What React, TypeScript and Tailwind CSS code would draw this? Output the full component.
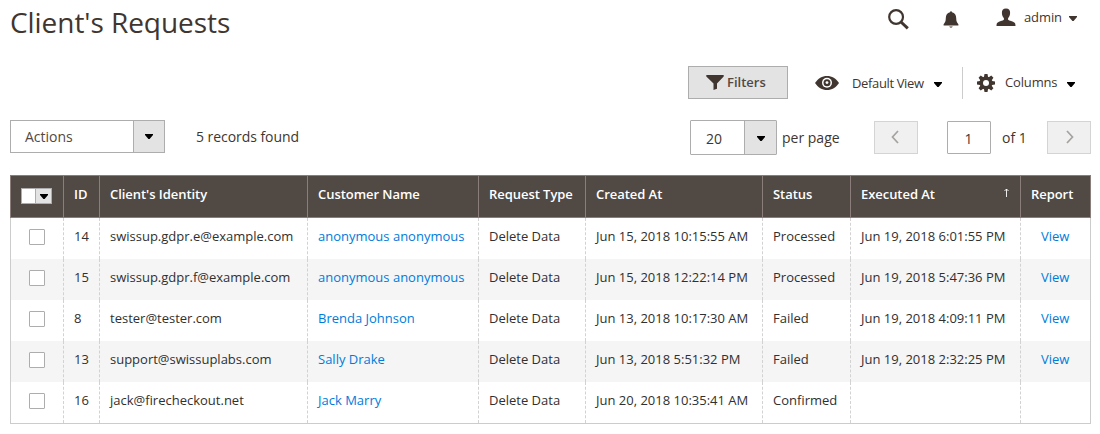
import React from "react";

type Request = {
  id: number;
  identity: string;
  customer: string;
  created: string;
  status: string;
  executed?: string;
};

const requests: Request[] = [
  { id: 14, identity: "swissup.gdpr.e@example.com", customer: "anonymous anonymous", created: "Jun 15, 2018 10:15:55 AM", status: "Processed", executed: "Jun 19, 2018 6:01:55 PM" },
  { id: 15, identity: "swissup.gdpr.f@example.com", customer: "anonymous anonymous", created: "Jun 15, 2018 12:22:14 PM", status: "Processed", executed: "Jun 19, 2018 5:47:36 PM" },
  { id: 8, identity: "tester@tester.com", customer: "Brenda Johnson", created: "Jun 13, 2018 10:17:30 AM", status: "Failed", executed: "Jun 19, 2018 4:09:11 PM" },
  { id: 13, identity: "support@swissuplabs.com", customer: "Sally Drake", created: "Jun 13, 2018 5:51:32 PM", status: "Failed", executed: "Jun 19, 2018 2:32:25 PM" },
  { id: 16, identity: "jack@firecheckout.net", customer: "Jack Marry", created: "Jun 20, 2018 10:35:41 AM", status: "Confirmed" },
];

const columns = "grid grid-cols-[53px_36px_208px_171px_107px_177px_88px_170px_71px]";

function Caret({ className = "" }: { className?: string }) {
  return (
    <svg viewBox="0 0 8 5" className={`h-[5px] w-2 shrink-0 fill-current ${className}`}>
      <path d="M0 0h8v1L4.6 5H3.4L0 1z" />
    </svg>
  );
}

function HeadCell({ children, className = "" }: { children?: React.ReactNode; className?: string }) {
  return <div className={`border-l border-[#8a7d7a] pt-[9px] pl-[10px] leading-[18px] ${className}`}>{children}</div>;
}

function Cell({ children, className = "" }: { children?: React.ReactNode; className?: string }) {
  return <div className={`border-l border-dashed border-[#d2d2d2] pt-[9px] pl-[10px] leading-[18px] ${className}`}>{children}</div>;
}

function TopBar() {
  return (
    <header className="flex h-[66px] items-start pl-[10px]">
      <h1 className="w-[877px] pt-[3px] text-[28px] leading-[38px] tracking-[-0.05px] text-[#41362f]">Client's Requests</h1>
      <svg viewBox="0 0 22 22" className="mt-[8px] h-[22px] w-[22px]" fill="none" stroke="#41362f">
        <circle cx="9.1" cy="9" r="6.9" strokeWidth="2.2" />
        <path d="M14 14l6.8 6.3" strokeWidth="3" />
      </svg>
      <svg viewBox="0 0 16 18" className="mt-[11px] ml-[34px] h-[18px] w-4" fill="#41362f">
        <path d="M7 1.2a1 1 0 0 1 2 0c2.8.5 4.2 2.7 4.2 5.8 0 3.4.8 4.7 2.2 6.2v1.3H.6v-1.3C2 11.700 2.800 10.400 2.800 7c0-3.100 1.400-5.300 4.200-5.800zM6.300 15.600h3.400c-.4 1.500-3 1.500-3.400 0z" />
      </svg>
      <svg viewBox="0 0 20 18" className="mt-[8px] ml-[37px] h-[18px] w-5" fill="#41362f">
        <path d="M10 .5c3 0 4.300 1.800 4.100 4.500-.1 2.400-.9 4-2 5.100v1.700c1 1 4.900 1.500 6.500 3 .7.700.9 1.600.9 3.200H.5c0-1.600.2-2.500.9-3.200 1.600-1.500 5.500-2 6.500-3v-1.700c-1.100-1.100-1.900-2.700-2-5.100C5.700 2.300 7 .5 10 .5z" />
      </svg>
      <span className="mt-[8px] ml-[8px] w-[45px] text-[13px] leading-[18px] tracking-[-0.1px] text-[#41362f]">admin</span>
      <Caret className="mt-[16px] text-[#41362f]" />
    </header>
  );
}

function ViewControls() {
  return (
    <div className="flex h-[33px] items-center pl-[688px] text-[13px] leading-[18px] text-[#41362f]">
      <button className="flex h-[33px] w-[100px] shrink-0 items-center border border-[#adadad] bg-[#e3e3e3] pl-[17px] font-semibold text-[#514943]">
        <svg viewBox="0 0 18 15" className="mr-[3px] h-[15px] w-[18px] fill-[#41362f]">
          <path d="M.3 0h17.400v1.500L11 8.500v5.200L7.500 15V8.500L.3 1.500z" />
        </svg>
        <span className="pb-[2px]">Filters</span>
      </button>
      <svg viewBox="0 0 24 14" className="ml-[27px] h-[14px] w-6 shrink-0">
        <path fill="#41362f" d="M0 7C3 2.500 7 0 12 0s9 2.500 12 7c-3 4.500-7 7-12 7S3 11.500 0 7z" />
        <circle cx="12" cy="6.800" r="5" fill="#fff" />
        <circle cx="12" cy="6.800" r="3.500" fill="#41362f" />
        <circle cx="12" cy="6.600" r="1.400" fill="#fff" />
      </svg>
      <span className="ml-[13px] w-[82px] shrink-0 tracking-[-0.36px]">Default View</span>
      <Caret className="mt-[3px] text-black" />
      <div className="ml-[20px] flex h-8 shrink-0 items-center border-l border-[#cccccc] pl-[14px]">
        <svg viewBox="-9 -9 18 18" className="h-[18px] w-[18px] shrink-0">
          <g fill="#41362f">
            <circle r="6.500" />
            {[0, 45, 90, 135].map((angle) => (
              <path key={angle} d="M-2.100-6L-1.500-9h3l.6 3v12l-.6 3h-3l-.6-3z" transform={`rotate(${angle})`} />
            ))}
          </g>
          <circle r="3" fill="#fff" />
        </svg>
        <span className="ml-[10px] w-[62px] pb-[2px] tracking-[-0.15px]">Columns</span>
        <Caret className="mt-[3px] text-black" />
      </div>
    </div>
  );
}

function Pager() {
  return (
    <div className="mt-[21px] flex h-[35px] items-start pl-[10px] text-[14px] leading-[19px] text-[#41362f]">
      <div className="flex h-[33px] w-[155px] shrink-0 border border-[#adadad] text-[#514943]">
        <span className="flex-1 pt-[6px] pl-[14px]">Actions</span>
        <span className="flex w-[31px] items-center justify-center border-l border-[#adadad] bg-[#e3e3e3] text-black"><Caret /></span>
      </div>
      <span className="ml-[31px] w-[494px] shrink-0 pt-[7px] tracking-[-0.05px]">5 records found</span>
      <div className="flex h-[35px] w-[87px] shrink-0 rounded-[1px] border border-[#adadad]">
        <span className="flex-1 pt-[8px] pl-[15px]">20</span>
        <span className="flex w-8 items-center justify-center border-l border-[#adadad] bg-[#e3e3e3] pt-[2px] text-black"><Caret /></span>
      </div>
      <span className="ml-[5px] w-[92px] shrink-0 pt-[8px]">per page</span>
      <button className="mt-px flex h-[33px] w-11 shrink-0 items-center justify-center border border-[#d4d4d4] bg-[#f0f0f0]">
        <svg viewBox="0 0 8 14" className="mb-[2px] ml-[-3px] h-[14px] w-2" fill="none" stroke="#a5a29f" strokeWidth="1.700"><path d="M7 1L1.500 7 7 13" /></svg>
      </button>
      <span className="mt-px ml-[29px] h-[33px] w-11 shrink-0 rounded-[1px] border border-[#adadad] pt-[7px] pr-px text-center">1</span>
      <span className="ml-[11px] w-[45px] shrink-0 pt-[8px]">of 1</span>
      <button className="mt-px flex h-[33px] w-11 shrink-0 items-center justify-center border border-[#d4d4d4] bg-[#f0f0f0]">
        <svg viewBox="0 0 8 14" className="mb-[2px] ml-[2px] h-[14px] w-2" fill="none" stroke="#a5a29f" strokeWidth="1.700"><path d="M1 1l5.500 6L1 13" /></svg>
      </button>
    </div>
  );
}

export default function App() {
  return (
    <main className="h-[434px] w-[1100px] overflow-hidden bg-white font-['Open_Sans',sans-serif]">
      <TopBar />
      <ViewControls />
      <Pager />
      <section className="mt-[20px] ml-[10px] w-[1081px] text-[13px] text-[#303030]">
        <div className={`${columns} h-[43px] border-y border-r border-[#8a7d7a] bg-[#514943] font-semibold tracking-[-0.05px] text-white`}>
          <HeadCell className="pt-[12px]">
            <span className="flex h-4 w-[31px] border border-[#adadad] bg-white">
              <span className="ml-auto flex w-4 items-center justify-center border-l border-[#adadad] bg-[#e3e3e3] text-black"><Caret className="mt-px" /></span>
            </span>
          </HeadCell>
          <HeadCell>ID</HeadCell>
          <HeadCell>Client's Identity</HeadCell>
          <HeadCell>Customer Name</HeadCell>
          <HeadCell>Request Type</HeadCell>
          <HeadCell>Created At</HeadCell>
          <HeadCell>Status</HeadCell>
          <HeadCell className="flex justify-between pr-[11px]">
            <span>Executed At</span>
            <svg viewBox="0 0 5 9" className="mt-[3px] h-[9px] w-[5px]" fill="none" stroke="#fff" strokeWidth="0.900"><path d="M2.500 9V1M.5 3l2-2 2 2" /></svg>
          </HeadCell>
          <HeadCell>Report</HeadCell>
        </div>
        <div className="border-r border-b border-[#cccccc]">
          {requests.map((r) => (
            <div key={r.id} className={`${columns} h-[41px] even:bg-[#f5f5f5]`}>
              <div className="border-l border-[#cccccc] pt-[11px] pl-[18px]">
                <span className="block h-4 w-4 rounded-[1px] border border-[#adadad] bg-white" />
              </div>
              <Cell>{r.id}</Cell>
              <Cell>{r.identity}</Cell>
              <Cell className="text-[#007bdb]">{r.customer}</Cell>
              <Cell>Delete Data</Cell>
              <Cell>{r.created}</Cell>
              <Cell>{r.status}</Cell>
              <Cell>{r.executed}</Cell>
              <Cell className="pl-[20px] text-[#007bdb]">{r.executed && "View"}</Cell>
            </div>
          ))}
        </div>
      </section>
    </main>
  );
}
